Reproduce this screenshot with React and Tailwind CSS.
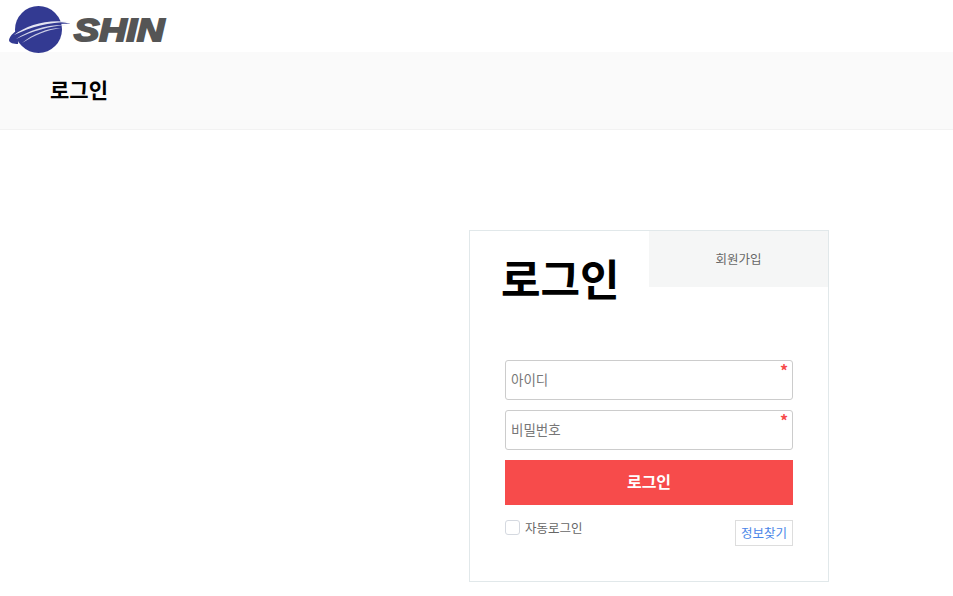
const font = { fontFamily: '"Noto Sans CJK KR", "Noto Sans", sans-serif' };

const Logo = () => (
  <div className="flex items-start pl-[9px] pt-[5px] h-[52px]">
    <svg width="62" height="50" viewBox="0 0 62 50" className="shrink-0">
      <circle cx="29.5" cy="24.5" r="23.5" fill="#333a92" />
      <path d="M0 35 C1 30 6 26 14 22 C26 16 44 14 62 19 C44 18 28 21 18 27 C12 31 9 35 9 39 C5 39 0 38 0 35Z" fill="#333a92" />
      <path d="M5 30 C18 20 38 14 60 17 C40 17 22 22 5 30Z" fill="#e4e5f2" />
      <path d="M7 34 C20 25 38 19 58 20 C40 21 24 26 7 34Z" fill="#d5d7ea" />
      <path d="M13 38 C24 29 38 23 52 23 C38 25 26 30 13 38Z" fill="#c8cbe4" />
    </svg>
    <span
      className="ml-[3px] mt-[12px] inline-block origin-left scale-x-[1.22] text-[31px] leading-[28px] font-black italic text-[#555555] [-webkit-text-stroke:2px_#555555]"
      style={{ fontFamily: '"Liberation Sans", Arial, sans-serif' }}
    >
      SHIN
    </span>
  </div>
);

const Field = ({ placeholder, type = 'text' }) => (
  <div className="relative">
    <input
      type={type}
      placeholder={placeholder}
      className="block w-full h-10 pl-[5px] pr-[6px] pb-[2px] border border-[#cccccc] rounded-[3px] bg-white text-[13.5px] outline-none placeholder:text-[#777777]"
    />
    <span className="absolute top-[2px] right-[5px] text-[16px] leading-[16px] font-bold text-[#f74b4b]">*</span>
  </div>
);

export default function App() {
  return (
    <div className="min-h-[596px] bg-white" style={font}>
      <Logo />

      {/* Page title */}
      <div className="h-[78px] flex items-center pl-[50px] pb-[1px] bg-[#fafafa] border-b border-[#f2f2f2]">
        <h1 className="text-[21px] font-bold text-black">로그인</h1>
      </div>

      <div className="flex justify-end pr-[124px] pt-[100px]">
        <div className="w-[360px] h-[352px] border border-[#e1e8ea] bg-white">
          <div className="flex h-[129px]">
            <div className="w-[179px] pl-[31px] pt-[14px]">
              <h2 className="text-[43px] leading-[64px] font-bold text-black">로그인</h2>
            </div>
            <a className="w-[179px] h-[56px] flex items-center justify-center bg-[#f5f6f6] text-[12.5px] text-[#666666]">
              회원가입
            </a>
          </div>

          <form className="px-[35px] flex flex-col gap-[10px]">
            <Field placeholder="아이디" />
            <Field placeholder="비밀번호" type="password" />
            <button type="button" className="h-[45px] pb-[3px] bg-[#f74b4b] text-white text-[16px] font-bold">
              로그인
            </button>
            <div className="flex justify-between items-start mt-[5px]">
              <label className="flex items-center gap-[5px] text-[12.5px] leading-[15px] text-[#666666]">
                <span className="w-[15px] h-[15px] border border-[#d5d9e0] rounded-[3px] bg-white" />
                자동로그인
              </label>
              <a className="w-[58px] h-[26px] flex items-center justify-center border border-[#dddddd] text-[12.5px] text-[#4a86e8]">
                정보찾기
              </a>
            </div>
          </form>
        </div>
      </div>
    </div>
  );
}
